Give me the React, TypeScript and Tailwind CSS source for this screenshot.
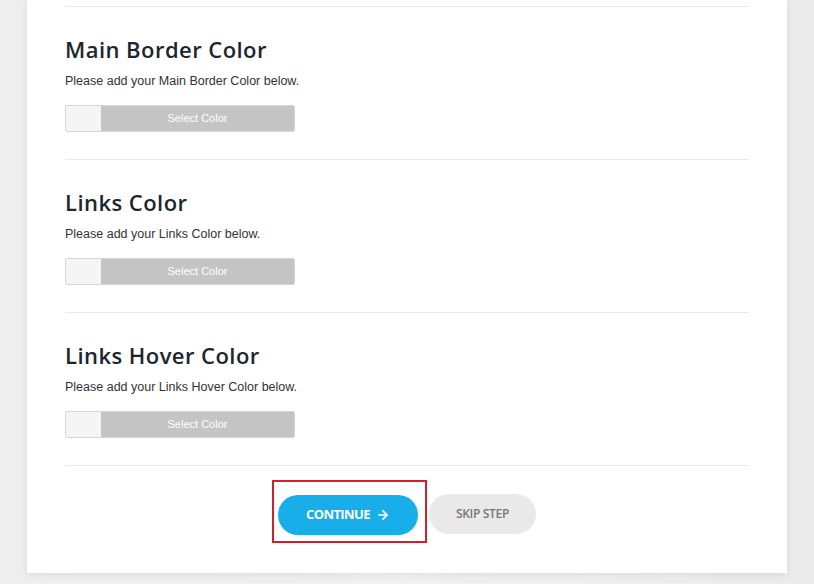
import { ArrowRight } from "lucide-react";

type ColorFieldProps = {
    title: string;
};

function ColorField({ title }: ColorFieldProps) {
    return (
        <div className="border-t border-[#e9e9e9] pt-[27px] pb-[27px]">
            <h2 className="text-[22px] leading-[30px] font-semibold text-[#1b2631] font-['Open_Sans',sans-serif] tracking-[0.45px]">
                {title}
            </h2>
            <p className="mt-[10px] text-[12.5px] leading-[14px] text-[#333] font-['Liberation_Sans',Arial,sans-serif]">
                Please add your {title} below.
            </p>
            <div className="mt-[17px] flex w-[230px] h-[27px] rounded-[2px] border border-[#d6d6d6] overflow-hidden">
                <div className="w-[35px] bg-[#f5f5f5]" />
                <button className="flex-1 bg-[#c4c4c4] text-white text-[11px] font-['Liberation_Sans',Arial,sans-serif]">
                    Select Color
                </button>
            </div>
        </div>
    );
}

export default function App() {
    const fields = ["Main Border Color", "Links Color", "Links Hover Color"];
    return (
        <div className="w-[814px] h-[584px] bg-gradient-to-r from-[#eeeeee] via-[#f1f1f1] to-[#ebebeb] overflow-hidden">
            <div className="ml-[27px] w-[760px] h-[573px] bg-white shadow-[0_2px_8px_rgba(0,0,0,0.08)] px-[38px] pt-[6px]">
                {fields.map((f) => (
                    <ColorField key={f} title={f} />
                ))}
                <div className="border-t border-[#e9e9e9] pt-[14px] pr-[6px] flex justify-center items-start gap-[2px]">
                    <div className="border-2 border-[#d21f2b] pl-[4px] pr-[7px] pt-[13px] pb-[6px]">
                        <button className="w-[140px] h-[40px] rounded-full bg-[#18aeea] text-white text-[13px] font-bold font-['Open_Sans',sans-serif] tracking-[-0.6px] flex items-center justify-center gap-[6px]">
                            CONTINUE
                            <ArrowRight size={14} strokeWidth={3} />
                        </button>
                    </div>
                    <button className="mt-[14px] w-[107px] h-[40px] rounded-full bg-[#e9e9e9] text-[#777] text-[12px] font-semibold font-['Open_Sans',sans-serif] tracking-[-0.3px]">
                        SKIP STEP
                    </button>
                </div>
            </div>
        </div>
    );
}
